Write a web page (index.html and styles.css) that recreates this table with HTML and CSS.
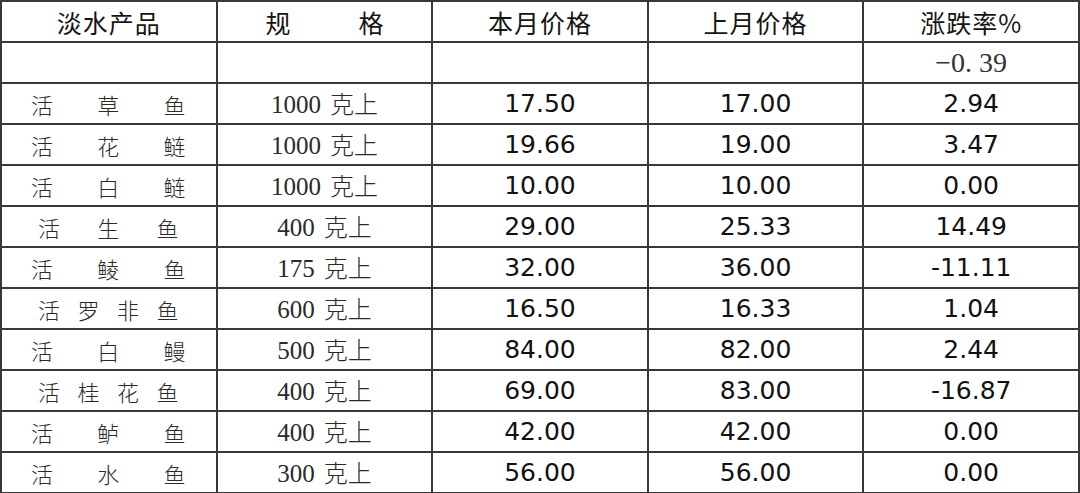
FILE: index.html
```html
<!DOCTYPE html>
<html lang="zh-CN">
<head>
<meta charset="utf-8">
<title>淡水产品价格</title>
<link rel="stylesheet" href="styles.css">
</head>
<body>
<table class="price">
  <colgroup><col><col><col><col><col></colgroup>
  <thead>
    <tr>
      <th>淡水产品</th>
      <th><span class="spec-h"><span>规</span><span>格</span></span></th>
      <th>本月价格</th>
      <th>上月价格</th>
      <th>涨跌率%</th>
    </tr>
  </thead>
  <tbody>
    <tr>
      <td></td><td></td><td></td><td></td>
      <td class="total">−0. 39</td>
    </tr>
    <tr>
      <td><div class="name wide"><span>活</span><span>草</span><span>鱼</span></div></td>
      <td class="spec"><span class="num-s">1000</span>克上</td>
      <td class="num">17.50</td><td class="num">17.00</td><td class="num">2.94</td>
    </tr>
    <tr>
      <td><div class="name wide"><span>活</span><span>花</span><span>鲢</span></div></td>
      <td class="spec"><span class="num-s">1000</span>克上</td>
      <td class="num">19.66</td><td class="num">19.00</td><td class="num">3.47</td>
    </tr>
    <tr>
      <td><div class="name wide"><span>活</span><span>白</span><span>鲢</span></div></td>
      <td class="spec"><span class="num-s">1000</span>克上</td>
      <td class="num">10.00</td><td class="num">10.00</td><td class="num">0.00</td>
    </tr>
    <tr>
      <td><div class="name narrow"><span>活</span><span>生</span><span>鱼</span></div></td>
      <td class="spec"><span class="num-s">400</span>克上</td>
      <td class="num">29.00</td><td class="num">25.33</td><td class="num">14.49</td>
    </tr>
    <tr>
      <td><div class="name wide"><span>活</span><span>鲮</span><span>鱼</span></div></td>
      <td class="spec"><span class="num-s">175</span>克上</td>
      <td class="num">32.00</td><td class="num">36.00</td><td class="num">-11.11</td>
    </tr>
    <tr>
      <td><div class="name narrow"><span>活</span><span>罗</span><span>非</span><span>鱼</span></div></td>
      <td class="spec"><span class="num-s">600</span>克上</td>
      <td class="num">16.50</td><td class="num">16.33</td><td class="num">1.04</td>
    </tr>
    <tr>
      <td><div class="name wide"><span>活</span><span>白</span><span>鳗</span></div></td>
      <td class="spec"><span class="num-s">500</span>克上</td>
      <td class="num">84.00</td><td class="num">82.00</td><td class="num">2.44</td>
    </tr>
    <tr>
      <td><div class="name narrow"><span>活</span><span>桂</span><span>花</span><span>鱼</span></div></td>
      <td class="spec"><span class="num-s">400</span>克上</td>
      <td class="num">69.00</td><td class="num">83.00</td><td class="num">-16.87</td>
    </tr>
    <tr>
      <td><div class="name wide"><span>活</span><span>鲈</span><span>鱼</span></div></td>
      <td class="spec"><span class="num-s">400</span>克上</td>
      <td class="num">42.00</td><td class="num">42.00</td><td class="num">0.00</td>
    </tr>
    <tr>
      <td><div class="name wide"><span>活</span><span>水</span><span>鱼</span></div></td>
      <td class="spec"><span class="num-s">300</span>克上</td>
      <td class="num">56.00</td><td class="num">56.00</td><td class="num">0.00</td>
    </tr>
  </tbody>
</table>
</body>
</html>
```

FILE: styles.css
```css
html, body {
  margin: 0;
  padding: 0;
  background: #ffffff;
}

.price {
  width: 1080px;
  border-collapse: collapse;
  table-layout: fixed;
  color: #1a1a1a;
}

.price col {
  width: 20%;
}

.price tr {
  height: 41px;
}

.price th,
.price td {
  border: 2px solid #383838;
  padding: 0;
  height: 39px;
  line-height: 28px;
  text-align: center;
  vertical-align: middle;
  box-sizing: border-box;
}

.price th {
  font-family: "Noto Sans CJK SC", sans-serif;
  font-weight: 400;
  font-size: 25px;
  letter-spacing: 1px;
  color: #151515;
}

.spec-h {
  display: inline-flex;
  gap: 68px;
  letter-spacing: 0;
}

.name {
  display: flex;
  justify-content: space-between;
  align-items: center;
  height: 28px;
  font-family: "Noto Sans CJK SC", sans-serif;
  font-weight: 300;
  font-size: 22px;
  line-height: 28px;
  color: #2a2a2a;
}

.name.wide {
  padding: 0 30px 0 29px;
}

.name.narrow {
  padding: 0 37px 0 36px;
}

.spec {
  font-family: "Noto Sans CJK SC", sans-serif;
  font-weight: 300;
  font-size: 24px;
  color: #2a2a2a;
}

.num-s {
  font-family: "Liberation Serif", serif;
  font-size: 25px;
  font-weight: 400;
  margin-right: 9px;
}

.num {
  font-family: "DejaVu Sans", sans-serif;
  font-size: 25px;
  color: #111111;
}

.total {
  font-family: "Liberation Serif", serif;
  font-size: 28px;
  color: #333333;
  padding-top: 4px;
}
```
